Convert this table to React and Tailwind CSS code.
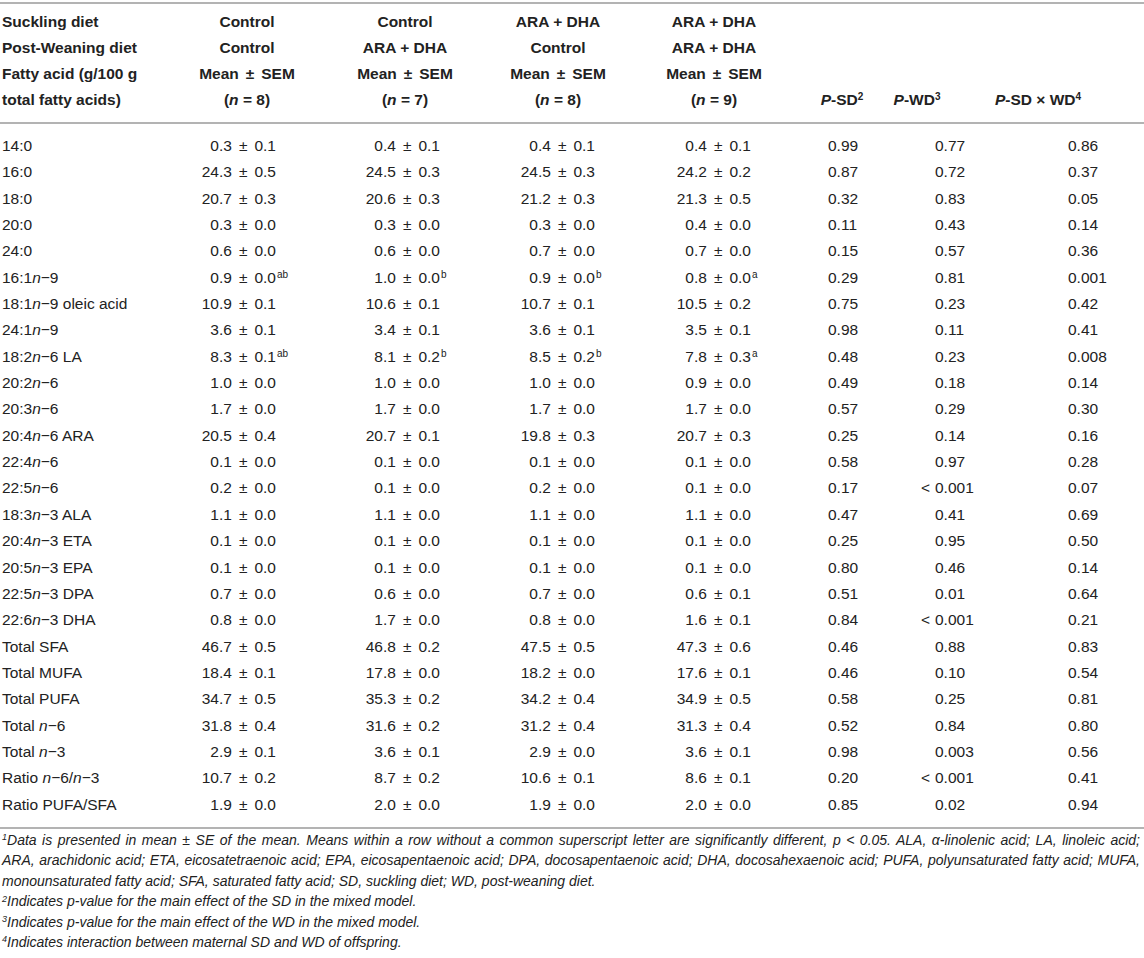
import React from "react";

const rows = [
  ["14:0", "0.3 ± 0.1", "0.4 ± 0.1", "0.4 ± 0.1", "0.4 ± 0.1", "0.99", "0.77", "0.86"],
  ["16:0", "24.3 ± 0.5", "24.5 ± 0.3", "24.5 ± 0.3", "24.2 ± 0.2", "0.87", "0.72", "0.37"],
  ["18:0", "20.7 ± 0.3", "20.6 ± 0.3", "21.2 ± 0.3", "21.3 ± 0.5", "0.32", "0.83", "0.05"],
  ["20:0", "0.3 ± 0.0", "0.3 ± 0.0", "0.3 ± 0.0", "0.4 ± 0.0", "0.11", "0.43", "0.14"],
  ["24:0", "0.6 ± 0.0", "0.6 ± 0.0", "0.7 ± 0.0", "0.7 ± 0.0", "0.15", "0.57", "0.36"],
  ["16:1n−9", "0.9 ± 0.0^ab", "1.0 ± 0.0^b", "0.9 ± 0.0^b", "0.8 ± 0.0^a", "0.29", "0.81", "0.001"],
  ["18:1n−9 oleic acid", "10.9 ± 0.1", "10.6 ± 0.1", "10.7 ± 0.1", "10.5 ± 0.2", "0.75", "0.23", "0.42"],
  ["24:1n−9", "3.6 ± 0.1", "3.4 ± 0.1", "3.6 ± 0.1", "3.5 ± 0.1", "0.98", "0.11", "0.41"],
  ["18:2n−6 LA", "8.3 ± 0.1^ab", "8.1 ± 0.2^b", "8.5 ± 0.2^b", "7.8 ± 0.3^a", "0.48", "0.23", "0.008"],
  ["20:2n−6", "1.0 ± 0.0", "1.0 ± 0.0", "1.0 ± 0.0", "0.9 ± 0.0", "0.49", "0.18", "0.14"],
  ["20:3n−6", "1.7 ± 0.0", "1.7 ± 0.0", "1.7 ± 0.0", "1.7 ± 0.0", "0.57", "0.29", "0.30"],
  ["20:4n−6 ARA", "20.5 ± 0.4", "20.7 ± 0.1", "19.8 ± 0.3", "20.7 ± 0.3", "0.25", "0.14", "0.16"],
  ["22:4n−6", "0.1 ± 0.0", "0.1 ± 0.0", "0.1 ± 0.0", "0.1 ± 0.0", "0.58", "0.97", "0.28"],
  ["22:5n−6", "0.2 ± 0.0", "0.1 ± 0.0", "0.2 ± 0.0", "0.1 ± 0.0", "0.17", "< 0.001", "0.07"],
  ["18:3n−3 ALA", "1.1 ± 0.0", "1.1 ± 0.0", "1.1 ± 0.0", "1.1 ± 0.0", "0.47", "0.41", "0.69"],
  ["20:4n−3 ETA", "0.1 ± 0.0", "0.1 ± 0.0", "0.1 ± 0.0", "0.1 ± 0.0", "0.25", "0.95", "0.50"],
  ["20:5n−3 EPA", "0.1 ± 0.0", "0.1 ± 0.0", "0.1 ± 0.0", "0.1 ± 0.0", "0.80", "0.46", "0.14"],
  ["22:5n−3 DPA", "0.7 ± 0.0", "0.6 ± 0.0", "0.7 ± 0.0", "0.6 ± 0.1", "0.51", "0.01", "0.64"],
  ["22:6n−3 DHA", "0.8 ± 0.0", "1.7 ± 0.0", "0.8 ± 0.0", "1.6 ± 0.1", "0.84", "< 0.001", "0.21"],
  ["Total SFA", "46.7 ± 0.5", "46.8 ± 0.2", "47.5 ± 0.5", "47.3 ± 0.6", "0.46", "0.88", "0.83"],
  ["Total MUFA", "18.4 ± 0.1", "17.8 ± 0.0", "18.2 ± 0.0", "17.6 ± 0.1", "0.46", "0.10", "0.54"],
  ["Total PUFA", "34.7 ± 0.5", "35.3 ± 0.2", "34.2 ± 0.4", "34.9 ± 0.5", "0.58", "0.25", "0.81"],
  ["Total n−6", "31.8 ± 0.4", "31.6 ± 0.2", "31.2 ± 0.4", "31.3 ± 0.4", "0.52", "0.84", "0.80"],
  ["Total n−3", "2.9 ± 0.1", "3.6 ± 0.1", "2.9 ± 0.0", "3.6 ± 0.1", "0.98", "0.003", "0.56"],
  ["Ratio n−6/n−3", "10.7 ± 0.2", "8.7 ± 0.2", "10.6 ± 0.1", "8.6 ± 0.1", "0.20", "< 0.001", "0.41"],
  ["Ratio PUFA/SFA", "1.9 ± 0.0", "2.0 ± 0.0", "1.9 ± 0.0", "2.0 ± 0.0", "0.85", "0.02", "0.94"],
];

// pad of each mean column, so the number ends where the reference has it
const meanPad = ["pl-[16px]", "pl-[30px]", "pl-[25px]", "pl-[31px]"];

function PlusMinus({ text }) {
  const [a, b] = text.split(" ± ");
  return (
    <>
      {a}
      <span className="px-[7px]">±</span>
      {b}
    </>
  );
}

function Label({ text }) {
  // italic n in n−6, n−3, n−9
  const parts = text.split(/n(?=−)/);
  return parts.map((p, i) => (
    <React.Fragment key={i}>
      {i > 0 && <i>n</i>}
      {p}
    </React.Fragment>
  ));
}

function Mean({ value }) {
  const [num, sup] = value.split("^");
  return (
    <>
      <span className="inline-block w-[80px] text-right">
        <PlusMinus text={num} />
      </span>
      {sup && <sup className="text-[10px] ml-[1px]">{sup}</sup>}
    </>
  );
}

function HeadCol({ lines, pad }) {
  return (
    <th className={`${pad} text-center font-bold align-top`}>
      {lines.map((l, i) => (
        <div key={i} className="whitespace-nowrap">
          {l}
        </div>
      ))}
    </th>
  );
}

const n = (k) => (
  <>
    (<i>n</i> = {k})
  </>
);
const mean = <PlusMinus text="Mean ± SEM" />;

export default function App() {
  return (
    <div className="w-[1144px] h-[958px] bg-white text-[#222] font-['Liberation_Sans',Arial,sans-serif] text-[15.5px] overflow-hidden">
      <table className="w-[1144px] table-fixed border-collapse mt-[2px]">
        <colgroup>
          <col className="w-[180px]" />
          <col className="w-[150px]" />
          <col className="w-[160px]" />
          <col className="w-[150px]" />
          <col className="w-[160px]" />
          <col className="w-[80px]" />
          <col className="w-[110px]" />
          <col className="w-[154px]" />
        </colgroup>
        <thead>
          <tr className="border-t-2 border-b-2 border-[#b3b3b3] leading-[26px]">
            <th className="pl-[2px] pt-[5px] pb-[9px] text-left font-bold align-top">
              <div className="whitespace-nowrap">Suckling diet</div>
              <div className="whitespace-nowrap">Post-Weaning diet</div>
              <div className="whitespace-nowrap">Fatty acid (g/100 g</div>
              <div className="whitespace-nowrap">total fatty acids)</div>
            </th>
            <HeadCol pad="pr-[16px] pt-[5px] pb-[9px]" lines={["Control", "Control", mean, n(8)]} />
            <HeadCol pad="pr-[10px] pt-[5px] pb-[9px]" lines={["Control", "ARA + DHA", mean, n(7)]} />
            <HeadCol pad="pr-[14px] pt-[5px] pb-[9px]" lines={["ARA + DHA", "Control", mean, n(8)]} />
            <HeadCol pad="pr-[12px] pt-[5px] pb-[9px]" lines={["ARA + DHA", "ARA + DHA", mean, n(9)]} />
            <th className="pl-[4px] pb-[9px] text-center font-bold align-bottom whitespace-nowrap">
              <i>P</i>-SD<sup className="text-[10px]">2</sup>
            </th>
            <th className="pr-[36px] pb-[9px] text-center font-bold align-bottom whitespace-nowrap">
              <i>P</i>-WD<sup className="text-[10px]">3</sup>
            </th>
            <th className="pr-[58px] pb-[9px] text-center font-bold align-bottom whitespace-nowrap">
              <i>P</i>-SD × WD<sup className="text-[10px]">4</sup>
            </th>
          </tr>
        </thead>
        <tbody className="border-b-2 border-[#b3b3b3]">
          {rows.map((r, idx) => {
            const edge =
              idx === 0 ? "pt-[9px]" : idx === rows.length - 1 ? "pb-[9px]" : "";
            const [prefix, pwd] = r[6].startsWith("<") ? ["<", r[6].slice(2)] : ["", r[6]];
            return (
              <tr key={idx} className="leading-[26.35px]">
                <td className={`pl-[2px] whitespace-nowrap ${edge}`}>
                  <Label text={r[0]} />
                </td>
                {r.slice(1, 5).map((v, j) => (
                  <td key={j} className={`${meanPad[j]} whitespace-nowrap ${edge}`}>
                    <Mean value={v} />
                  </td>
                ))}
                <td className={`pl-[28px] ${edge}`}>{r[5]}</td>
                <td className={`pl-[41px] whitespace-nowrap ${edge}`}>
                  <span className="inline-block w-[14px]">{prefix}</span>
                  {pwd}
                </td>
                <td className={`pl-[78px] ${edge}`}>{r[7]}</td>
              </tr>
            );
          })}
        </tbody>
      </table>

      <div className="w-[1140px] pl-[2px] pt-[1px] italic text-[14px] leading-[20.4px] whitespace-nowrap">
        <div className="text-justify [text-align-last:justify]">
          <sup className="text-[9px]">1</sup>Data is presented in mean ± SE of the mean. Means within a row without a common superscript letter are significantly different, p {"<"} 0.05. ALA, α-linolenic acid; LA, linoleic acid;
        </div>
        <div className="text-justify [text-align-last:justify]">
          ARA, arachidonic acid; ETA, eicosatetraenoic acid; EPA, eicosapentaenoic acid; DPA, docosapentaenoic acid; DHA, docosahexaenoic acid; PUFA, polyunsaturated fatty acid; MUFA,
        </div>
        <div>monounsaturated fatty acid; SFA, saturated fatty acid; SD, suckling diet; WD, post-weaning diet.</div>
        <div>
          <sup className="text-[9px]">2</sup>Indicates p-value for the main effect of the SD in the mixed model.
        </div>
        <div>
          <sup className="text-[9px]">3</sup>Indicates p-value for the main effect of the WD in the mixed model.
        </div>
        <div>
          <sup className="text-[9px]">4</sup>Indicates interaction between maternal SD and WD of offspring.
        </div>
      </div>
    </div>
  );
}
